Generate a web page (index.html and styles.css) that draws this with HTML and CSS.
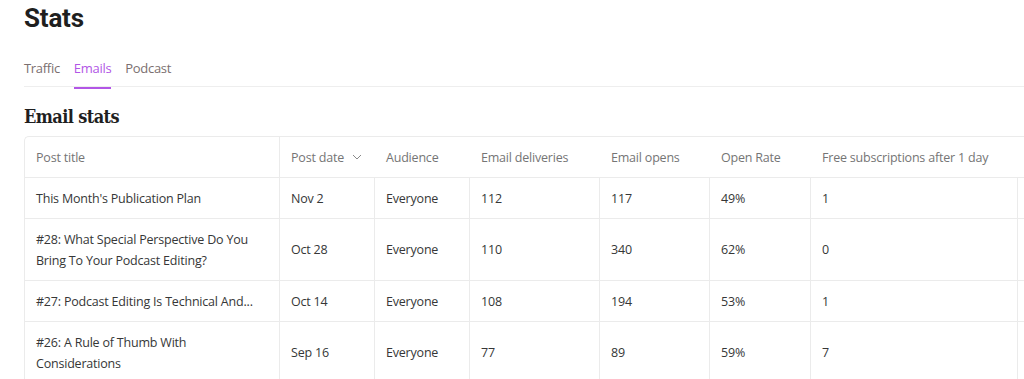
FILE: index.html
```html
<!DOCTYPE html>
<html>
<head>
<meta charset="utf-8">
<link rel="stylesheet" href="styles.css">
</head>
<body>
<div class="page">
  <h1 class="title">Stats</h1>
  <nav class="tabs">
    <span class="tab">Traffic</span>
    <span class="tab active">Emails</span>
    <span class="tab">Podcast</span>
  </nav>
  <h2 class="section">Email stats</h2>
  <div class="table-wrap">
    <table class="stats">
      <colgroup>
        <col class="c-title"><col class="c-date"><col class="c-aud"><col class="c-del"><col class="c-open"><col class="c-rate"><col class="c-free"><col class="c-rest">
      </colgroup>
      <thead>
        <tr>
          <th class="sticky">Post title</th>
          <th>Post date <svg class="chev" width="10" height="6" viewBox="0 0 10 6"><path d="M1 1l4 4 4-4" fill="none" stroke="#8a8a8a" stroke-width="1"/></svg></th>
          <th>Audience</th>
          <th>Email deliveries</th>
          <th>Email opens</th>
          <th>Open Rate</th>
          <th>Free subscriptions after 1 day</th>
          <th></th>
        </tr>
      </thead>
      <tbody>
        <tr>
          <td class="sticky">This Month's Publication Plan</td>
          <td>Nov 2</td><td>Everyone</td><td>112</td><td>117</td><td>49%</td><td>1</td><td></td>
        </tr>
        <tr class="tall">
          <td class="sticky">#28: What Special Perspective Do You Bring To Your Podcast Editing?</td>
          <td>Oct 28</td><td>Everyone</td><td>110</td><td>340</td><td>62%</td><td>0</td><td></td>
        </tr>
        <tr>
          <td class="sticky one-line">#27: Podcast Editing Is Technical And...</td>
          <td>Oct 14</td><td>Everyone</td><td>108</td><td>194</td><td>53%</td><td>1</td><td></td>
        </tr>
        <tr class="tall">
          <td class="sticky">#26: A Rule of Thumb With Considerations</td>
          <td>Sep 16</td><td>Everyone</td><td>77</td><td>89</td><td>59%</td><td>7</td><td></td>
        </tr>
      </tbody>
    </table>
  </div>
</div>
</body>
</html>
```
FILE: styles.css
```css
html, body {
  margin: 0;
  padding: 0;
  background: #ffffff;
  overflow: hidden;
}
body {
  font-family: "Open Sans", "Noto Sans", sans-serif;
  color: #363737;
}
.page {
  padding: 0 0 0 24px;
}
.title {
  font-family: Roboto, "Liberation Sans", sans-serif;
  font-weight: 700;
  font-size: 26px;
  line-height: 30px;
  margin: 3px 0 0 0;
  color: #1f1f1f;
  letter-spacing: -0.2px;
}
.tabs {
  display: flex;
  gap: 14px;
  margin-top: 24px;
  height: 30px;
  border-bottom: 1px solid #eeeeee;
  box-sizing: border-box;
}
.tab {
  font-size: 13px;
  line-height: 16px;
  color: #7b6f6f;
  padding-top: 3px;
  height: 30px;
  box-sizing: border-box;
  letter-spacing: -0.3px;
}
.tab.active {
  color: #b256e6;
  border-bottom: 2px solid #b256e6;
  height: 32px;
}
.section {
  font-family: "DejaVu Serif", "Liberation Serif", serif;
  font-stretch: semi-condensed;
  font-weight: 700;
  font-size: 18px;
  line-height: 22px;
  margin: 19px 0 0 0;
  color: #1f1f1f;
  letter-spacing: -0.6px;
}
.table-wrap {
  margin-top: 8px;
  width: 1100px;
}
.stats {
  border-collapse: separate;
  border-spacing: 0;
  table-layout: fixed;
  width: 1100px;
  border: 1px solid #ebebeb;
  border-right: none;
  border-radius: 5px 0 0 0;
  font-size: 12.5px;
}
.c-title { width: 255px; }
.c-date { width: 95px; }
.c-aud { width: 95px; }
.c-del { width: 130px; }
.c-open { width: 110px; }
.c-rate { width: 101px; }
.c-free { width: 207px; }
.c-rest { width: 107px; }
.stats th {
  font-weight: 400;
  color: #757575;
  text-align: left;
  height: 40px;
  padding: 0 11px;
  border-bottom: 1px solid #ebebeb;
  white-space: nowrap;
  letter-spacing: -0.2px;
}
.stats th.sticky {
  border-right: 1px solid #ebebeb;
}
.stats td {
  height: 40px;
  padding: 0 11px;
  color: #363737;
  border-bottom: 1px solid #ebebeb;
  border-right: 1px solid #ebebeb;
  line-height: 21px;
  letter-spacing: -0.2px;
}
.stats td:last-child {
  border-right: none;
}
.stats tr.tall td {
  height: 61px;
}
.stats td.sticky {
  padding-right: 30px;
}
.stats td.one-line {
  white-space: nowrap;
  overflow: hidden;
}
.chev {
  margin-left: 5px;
  vertical-align: 2px;
}
```
